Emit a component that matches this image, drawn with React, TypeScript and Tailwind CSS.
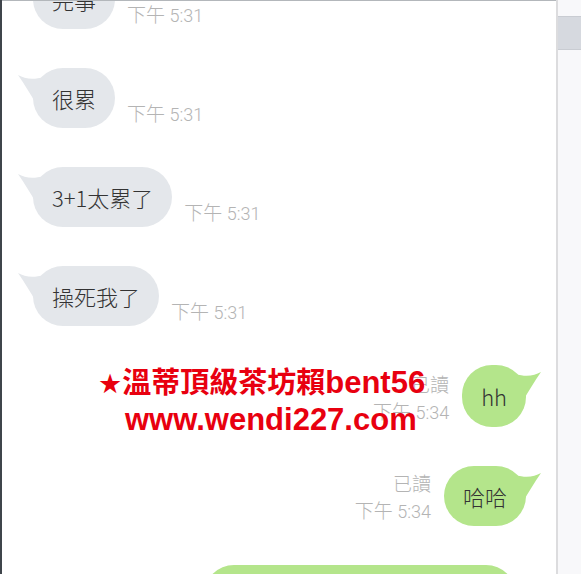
import type { ReactNode } from "react";

const cjk = { fontFamily: '"Noto Sans CJK TC", "Noto Sans", sans-serif' };
const stamp = { fontFamily: 'Roboto, "Noto Sans CJK TC", sans-serif' };

function Tail({ side, color }: { side: "left" | "right"; color: string }) {
  return (
    <svg
      width="28"
      height="32"
      viewBox="0 0 28 32"
      className={`absolute top-[5px] ${side === "left" ? "-left-[16px]" : "-right-[16px] -scale-x-100"}`}
    >
      <path
        d="M1 2 C 8 6, 16 7, 27 4 L 27 31 L 19 31 C 14 22, 8 12, 1 2 Z"
        fill={color}
      />
    </svg>
  );
}

function Bubble({
  side,
  children,
  className = "",
}: {
  side: "left" | "right";
  children: ReactNode;
  className?: string;
}) {
  const color = side === "left" ? "#e4e7eb" : "#b4e58b";
  return (
    <div
      className={`relative flex h-[60px] items-center rounded-[30px] px-[19px] text-[22px] font-light text-[#333] ${
        side === "left" ? "bg-[#e4e7eb]" : "bg-[#b4e58b]"
      } ${className}`}
      style={cjk}
    >
      <Tail side={side} color={color} />
      <span className="relative">{children}</span>
    </div>
  );
}

function Time({ t }: { t: string }) {
  return (
    <span className="text-[18px] font-light leading-none text-[#b4b4b4]" style={stamp}>
      <span className="text-[19px]" style={cjk}>
        下午
      </span>{" "}
      {t}
    </span>
  );
}

function Left({ text, className = "" }: { text: string; className?: string }) {
  return (
    <div className={`flex items-end gap-3 ${className}`}>
      <Bubble side="left">{text}</Bubble>
      <div className="mb-[1px]">
        <Time t="5:31" />
      </div>
    </div>
  );
}

function Right({ text, className = "", bubbleClass = "" }: { text: string; className?: string; bubbleClass?: string }) {
  return (
    <div className={`flex items-end justify-end gap-[13px] ${className}`}>
      <div className="mb-[5px] flex flex-col items-end gap-[8px]">
        <span className="text-[19px] font-light leading-none text-[#b4b4b4]" style={cjk}>
          已讀
        </span>
        <Time t="5:34" />
      </div>
      <Bubble side="right" className={bubbleClass}>
        {text}
      </Bubble>
    </div>
  );
}

export default function App() {
  return (
    <div className="relative flex h-[574px] w-[581px] overflow-hidden bg-white">
      {/* window edge */}
      <div className="w-[2px] bg-[#3f454b]" />

      {/* chat area */}
      <div className="flex-1 border-t border-[#b3b7bb] overflow-hidden">
        <div className="flex flex-col gap-[39px] pl-[31px] pr-[30px] mt-[-32px]">
          <Left text="完事" />
          <Left text="很累" />
          <Left text="3+1太累了" />
          <Left text="操死我了" />
          <Right text="hh" bubbleClass="h-[62px] px-[19px]" />
          <Right text="哈哈" bubbleClass="px-[19px]" />
          <div className="flex justify-end pr-[10px]">
            <div className="h-[60px] w-[312px] rounded-[30px] bg-[#b4e58b]" />
          </div>
        </div>
      </div>

      {/* scrollbar */}
      <div className="w-[25px] border-l-2 border-[#dcdcde] bg-[#f8f8fa] pt-[16px]">
        <div className="h-[34px] bg-[#d6d9df] border-y border-[#c9ccd2]" />
      </div>

      {/* watermark */}
      <div
        className="absolute left-[98px] top-[366px] font-bold leading-none text-[#e8000f]"
        style={{ fontFamily: '"Liberation Sans", "Noto Sans CJK TC", sans-serif' }}
      >
        <div className="flex items-baseline">
          <span className="text-[27px]" style={{ fontFamily: '"DejaVu Sans", sans-serif' }}>★</span>
          <span className="text-[29px]" style={cjk}>溫蒂頂級茶坊賴</span>
          <span className="text-[31px]">bent56</span>
        </div>
        <div className="mt-[6px] pl-[27px] text-[31px]">www.wendi227.com</div>
      </div>
    </div>
  );
}
